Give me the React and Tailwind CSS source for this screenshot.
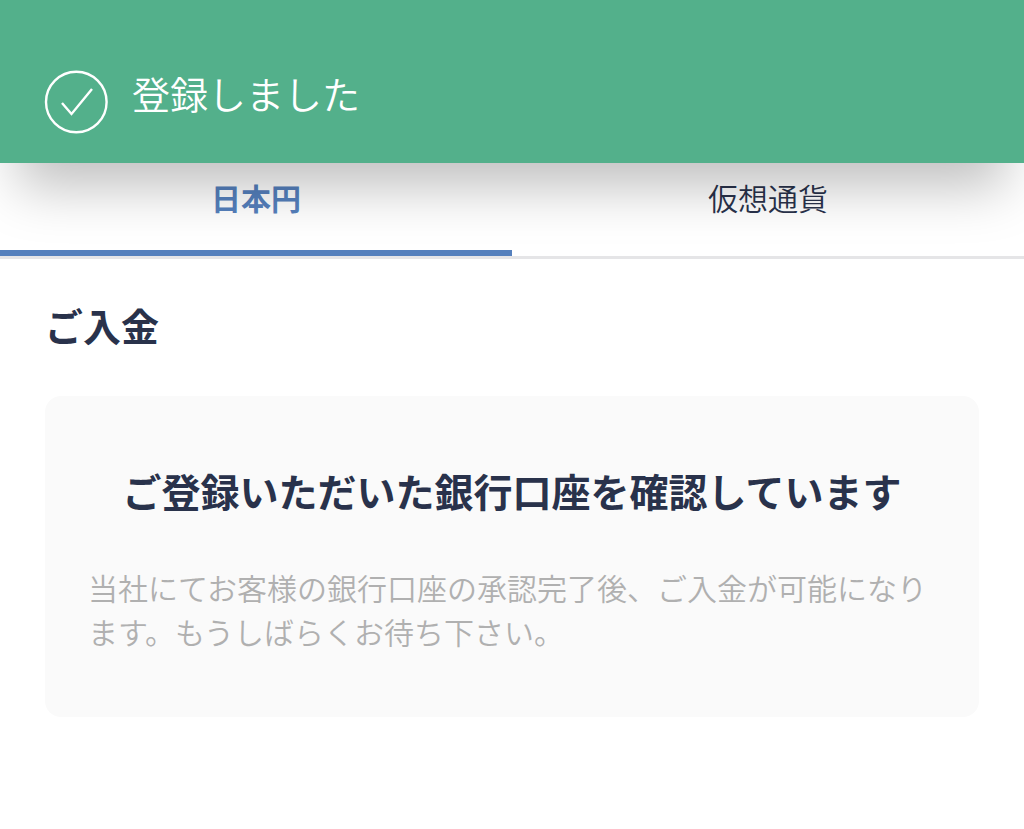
import React, { useState } from "react";

const TABS = [
  { id: "jpy", label: "日本円" },
  { id: "crypto", label: "仮想通貨" },
];

function Toast({ message }) {
  return (
    <div
      role="status"
      className="relative z-10 flex items-start gap-6 bg-[#53b08b] px-11 pt-[70px] pb-[29px] text-white shadow-[0_42px_54px_-18px_rgba(0,0,0,0.25)]"
    >
      <svg viewBox="0 0 64 64" className="size-16 shrink-0" fill="none" stroke="currentColor" strokeWidth="2.4" aria-hidden="true">
        <circle cx="32.3" cy="32" r="30.3" />
        <path d="M18 33 L27.5 44 L48 19" />
      </svg>
      <p className="text-[38px] leading-[46px] font-[350]">{message}</p>
    </div>
  );
}

export default function App() {
  const [active, setActive] = useState("jpy");

  return (
    <div className="min-h-screen bg-white font-['Noto_Sans_CJK_JP',sans-serif] text-[#29324b]">
      <Toast message="登録しました" />

      <div role="tablist" className="flex border-b-3 border-[#e5e5e7]">
        {TABS.map((tab) => (
          <button
            key={tab.id}
            type="button"
            role="tab"
            aria-selected={active === tab.id}
            onClick={() => setActive(tab.id)}
            className={`flex-1 border-b-6 pt-3.5 pb-[33px] text-[30px] leading-10 ${
              active === tab.id ? "border-[#5580bd] font-bold text-[#5580bd]" : "border-transparent font-[350]"
            }`}
          >
            {tab.label}
          </button>
        ))}
      </div>

      <main className="px-[45px] pt-10">
        <h1 className="text-[38px] leading-[52px] font-bold">ご入金</h1>
        <section className="mt-[45px] rounded-2xl bg-[#fafafa] px-[43px] py-16">
          <h2 className="text-center text-[39px] leading-[60px] font-bold">
            ご登録いただいた銀行口座を確認しています
          </h2>
          <p className="mt-[45px] text-[30px] leading-[44px] font-[350] text-[#b0b0b0]">
            当社にてお客様の銀行口座の承認完了後、ご入金が可能になります。もうしばらくお待ち下さい。
          </p>
        </section>
      </main>
    </div>
  );
}
